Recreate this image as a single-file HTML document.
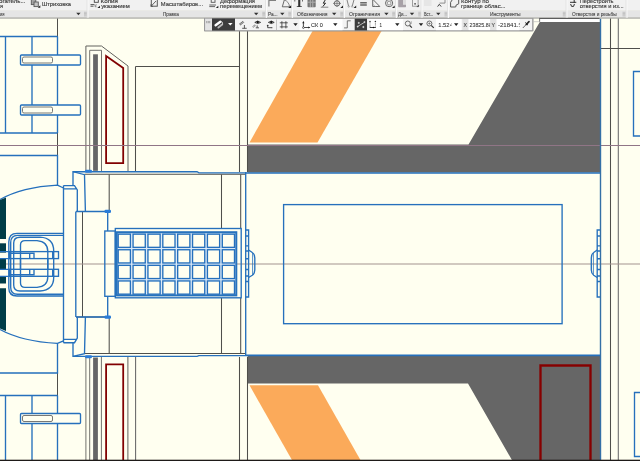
<!DOCTYPE html>
<html lang="ru">
<head>
<meta charset="utf-8">
<title>КОМПАС-3D</title>
<style>
html,body{margin:0;padding:0;background:#fffff0;overflow:hidden}
body{width:640px;height:461px;position:relative;font-family:"Liberation Sans",sans-serif}
svg{position:absolute;left:0;top:0;display:block}
.b{stroke:#2570bc;fill:none;stroke-width:1.35}
.b2{stroke:#2873bd;fill:none;stroke-width:1.8}
.k{stroke:#50504c;fill:none;stroke-width:1.05}
.g{stroke:#73736e;fill:none;stroke-width:1}
.r{stroke:#820606;fill:none;stroke-width:1.8}
.p{stroke:#907586;fill:none;stroke-width:1}
.t{font-family:"Liberation Sans",sans-serif;font-size:6.1px;fill:#333;stroke:#333;stroke-width:0.12px}
.l{font-family:"Liberation Sans",sans-serif;font-size:5.1px;fill:#4a4a4a;stroke:#4a4a4a;stroke-width:0.12px}
.f{font-family:"Liberation Sans",sans-serif;font-size:6.1px;fill:#333;stroke:#333;stroke-width:0.08px}
</style>
</head>
<body>
<svg width="640" height="461" viewBox="0 0 640 461">
<defs><filter id="soft" x="-10" y="-10" width="660" height="60" filterUnits="userSpaceOnUse"><feGaussianBlur stdDeviation="0.3"/></filter><filter id="soft2" x="-10" y="-10" width="660" height="481" filterUnits="userSpaceOnUse"><feGaussianBlur stdDeviation="0.32"/></filter></defs>
<rect x="0" y="0" width="640" height="461" fill="#fffff0"/>

<g id="drawing" filter="url(#soft2)">
<rect x="-10" y="-10" width="660" height="481" fill="#fffff0"/>
<!-- ===== fills ===== -->
<g id="fills" shape-rendering="geometricPrecision">
<!-- orange top -->
<polygon points="319.9,18 389,18 317.5,142.5 249.5,142.5" fill="#fbaa5a"/>
<!-- orange bottom -->
<polygon points="249.5,385.3 318,385.3 361,461 292.5,461" fill="#fbaa5a"/>
<!-- gray top -->
<polygon points="539.8,22 600,22 600,172.5 247.6,172.5 247.6,144.5 468.5,144.5" fill="#666666"/>
<!-- gray bottom -->
<polygon points="247.6,355.8 600.3,355.8 600.3,461 512.5,461 468,383.5 247.6,383.5" fill="#666666"/>
<!-- white strip above gray -->
<rect x="539.5" y="18.500" width="60" height="3.500" fill="#ffffff"/>
</g>

<!-- ===== thin black construction lines ===== -->
<g id="black">
<path class="k" d="M57.5,18V155.5"/>
<path class="k" d="M57.5,373V461"/>
<path class="k" d="M239.500,31V172 M247.500,31V172 M239.500,357V461 M247.500,357V461"/>
<path class="k" d="M135.500,66.500H239.500 M135.500,66.500V172"/>
<path class="k" d="M610.500,18V461"/><path class="k" d="M618.300,18V461" style="stroke:#6a6a6a"/>
<path class="k" d="M601,48.500H640"/>

</g>

<!-- door panel top -->
<g id="doortop">
<path class="g" d="M85.900,172V46H101.500L128,66V172" style="stroke:#62625e"/>
<path class="g" d="M89.700,172V50.300H101.500V172"/>
<rect x="93.100" y="54.300" width="4.800" height="116.500" fill="#666"/>
<path class="r" d="M106.100,56L123.200,68V163.200H106.100Z"/>
</g>
<!-- door panel bottom -->
<g id="doorbot">
<path class="g" d="M85.900,357V461 M89.700,357V461 M101.400,357V461"/><path class="g" style="stroke:#62625e" d="M127.900,357V461"/><path class="k" style="stroke:#666" d="M135.600,357V461"/>
<rect x="93.100" y="357.500" width="4.800" height="104" fill="#666"/>
<path class="r" d="M106.100,461V364.400H123.200V461"/>
</g>
<!-- inner body black -->
<g id="bodyblack">
<path class="k" d="M84.500,174.300H245.500 M84.500,353.500H245.500"/>
<path class="k" d="M109.200,174.500V211.500 M109.200,317V354"/>
<path class="k" d="M221.500,174.500V229 M221.500,298V354"/>
<path class="k" d="M240.700,174.500V228.500 M240.700,298V354"/>
<path class="k" d="M82.500,211.500V317"/>
<path class="k" d="M76,211.500H109 M76,317H109"/>
</g>
<!-- big dark red rect bottom right -->
<path d="M540.500,461V365.500H590.500V461" fill="none" stroke="#860505" stroke-width="2.4"/>

<!-- center lines -->
<path class="p" d="M0,145.500H640"/>
<path class="p" d="M0,264H640" style="stroke:#a3938f"/>
<!-- ===== blue geometry ===== -->
<g id="blue">
<!-- left top block -->
<path class="b" d="M0,36.500H57.500 M5.500,36.500V133 M32,36.500V133 M57.500,36.500V133 M0,133H57.500"/>
<rect class="b" x="20.500" y="55" width="60" height="10" rx="1" style="fill:#fffff0"/>
<rect x="22.500" y="57" width="30" height="6" rx="1.500" fill="#fffff0" stroke="#555" stroke-width="0.800"/>
<rect class="b" x="20.500" y="105" width="60" height="10" rx="1" style="fill:#fffff0"/>
<rect x="22.500" y="107" width="30" height="6" rx="1.500" fill="#fffff0" stroke="#555" stroke-width="0.800"/>
<!-- left bottom block -->
<path class="b" d="M0,395.500H57.500 M5.500,395.500V461 M32,395.500V461 M57.500,395.500V461"/>
<rect class="b" x="20.500" y="413.500" width="60" height="10" rx="1" style="fill:#fffff0"/>
<rect x="22.500" y="415.500" width="30" height="6" rx="1.500" fill="#fffff0" stroke="#555" stroke-width="0.800"/>
<!-- horizontal lines near arcs -->
<path class="b" d="M0,155.500H57.500V185.200 M0,373H57.500V343"/>
<!-- arcs -->
<path class="b" d="M0,199.500Q22,187 57.500,185.100L63.500,188"/>
<path class="b" d="M0,329.500Q22,341.500 57.500,343.400L63.500,340.800"/>
<!-- dark teal segments -->
<path d="M0,200L6,197.500V239H0Z" fill="#003c46"/>
<rect x="0" y="243.300" width="6" height="9.300" fill="#003c46"/>
<rect x="0" y="258.200" width="6" height="11.500" fill="#003c46"/>
<rect x="0" y="276.300" width="6" height="7.200" fill="#003c46"/>
<path d="M0,288.300H6V331L0,328.500Z" fill="#003c46"/>
<!-- bumper column -->
<path class="b" d="M63.500,185.600H74.500L77.300,190V211.500 M63.500,185.600V342.700 M63.500,188.800H76"/>
<path class="b" d="M63.500,342.700H74.500L77.300,338V317 M63.500,339.300H76"/>
<path class="b" d="M75.800,211.500V317"/>
<path class="b" d="M73,185.600V171.700H197L199,172.900H246 M73,342.700V356.400H197L199,355.600H246"/>
<path class="b" d="M246,173H601 M246,355.400H601" style="stroke-width:1.6"/>
<path class="b" d="M73,171.700L84.500,174.700L85.400,211.500 M73,356.400L84.500,353.700L85.400,317"/>
<path class="b" d="M76,211.500H108 M76,317H108"/>
<path class="b" d="M107.700,211.500V231 M107.700,296.500V317"/>
<rect x="104.500" y="209.800" width="6.500" height="3.200" rx="1.200" fill="#2b7cd8"/>
<rect x="104.500" y="315.500" width="6.500" height="3.200" rx="1.200" fill="#2b7cd8"/>
<rect x="85" y="169.800" width="7" height="3" rx="1.200" fill="#2b7cd8"/>
<rect x="85" y="355.300" width="7" height="3" rx="1.200" fill="#2b7cd8"/>
<!-- grid side panel -->
<rect class="b" x="104.800" y="231" width="10.500" height="65.300"/>
<!-- grid -->
<rect class="b" x="115.300" y="228.500" width="125.900" height="69.300"/>
<rect class="b2" x="116.700" y="232.200" width="119.600" height="63.200" style="fill:#dceaf7;stroke-width:2"/>
<rect class="b" x="118.20" y="234.15" width="12.200" height="13.200" style="fill:#fffff0"/>
<rect class="b" x="133.07" y="234.15" width="12.200" height="13.200" style="fill:#fffff0"/>
<rect class="b" x="147.94" y="234.15" width="12.200" height="13.200" style="fill:#fffff0"/>
<rect class="b" x="162.81" y="234.15" width="12.200" height="13.200" style="fill:#fffff0"/>
<rect class="b" x="177.68" y="234.15" width="12.200" height="13.200" style="fill:#fffff0"/>
<rect class="b" x="192.55" y="234.15" width="12.200" height="13.200" style="fill:#fffff0"/>
<rect class="b" x="207.42" y="234.15" width="12.200" height="13.200" style="fill:#fffff0"/>
<rect class="b" x="222.29" y="234.15" width="12.200" height="13.200" style="fill:#fffff0"/>
<rect class="b" x="118.20" y="249.75" width="12.200" height="13.200" style="fill:#fffff0"/>
<rect class="b" x="133.07" y="249.75" width="12.200" height="13.200" style="fill:#fffff0"/>
<rect class="b" x="147.94" y="249.75" width="12.200" height="13.200" style="fill:#fffff0"/>
<rect class="b" x="162.81" y="249.75" width="12.200" height="13.200" style="fill:#fffff0"/>
<rect class="b" x="177.68" y="249.75" width="12.200" height="13.200" style="fill:#fffff0"/>
<rect class="b" x="192.55" y="249.75" width="12.200" height="13.200" style="fill:#fffff0"/>
<rect class="b" x="207.42" y="249.75" width="12.200" height="13.200" style="fill:#fffff0"/>
<rect class="b" x="222.29" y="249.75" width="12.200" height="13.200" style="fill:#fffff0"/>
<rect class="b" x="118.20" y="265.35" width="12.200" height="13.200" style="fill:#fffff0"/>
<rect class="b" x="133.07" y="265.35" width="12.200" height="13.200" style="fill:#fffff0"/>
<rect class="b" x="147.94" y="265.35" width="12.200" height="13.200" style="fill:#fffff0"/>
<rect class="b" x="162.81" y="265.35" width="12.200" height="13.200" style="fill:#fffff0"/>
<rect class="b" x="177.68" y="265.35" width="12.200" height="13.200" style="fill:#fffff0"/>
<rect class="b" x="192.55" y="265.35" width="12.200" height="13.200" style="fill:#fffff0"/>
<rect class="b" x="207.42" y="265.35" width="12.200" height="13.200" style="fill:#fffff0"/>
<rect class="b" x="222.29" y="265.35" width="12.200" height="13.200" style="fill:#fffff0"/>
<rect class="b" x="118.20" y="280.95" width="12.200" height="13.200" style="fill:#fffff0"/>
<rect class="b" x="133.07" y="280.95" width="12.200" height="13.200" style="fill:#fffff0"/>
<rect class="b" x="147.94" y="280.95" width="12.200" height="13.200" style="fill:#fffff0"/>
<rect class="b" x="162.81" y="280.95" width="12.200" height="13.200" style="fill:#fffff0"/>
<rect class="b" x="177.68" y="280.95" width="12.200" height="13.200" style="fill:#fffff0"/>
<rect class="b" x="192.55" y="280.95" width="12.200" height="13.200" style="fill:#fffff0"/>
<rect class="b" x="207.42" y="280.95" width="12.200" height="13.200" style="fill:#fffff0"/>
<rect class="b" x="222.29" y="280.95" width="12.200" height="13.200" style="fill:#fffff0"/>
<!-- body right -->
<path class="b" d="M245.700,172V356"/>
<!-- fittings left -->
<path class="b" d="M245.600,230H248.600V245.800H245.600 M245.600,281.500H248.600V297H245.600 M248.600,245.800V281.500 M245.600,236H248.600 M245.600,251H248.600 M245.600,258.700H248.600 M245.600,269.500H248.600 M245.600,276H248.600"/>
<path class="b" d="M248.600,250L252.300,252.500Q254.800,254 254.800,258V270Q254.800,273.500 252.300,275.200L248.600,277.500"/>
<path class="b" d="M252.600,253V274.800" style="stroke-width:0.8"/>
<!-- fittings right -->
<path class="b" d="M600.500,230H597.200V245.800H600.500 M600.500,281.500H597.200V297H600.500 M597.200,245.800V281.500 M600.500,236H597.200 M600.500,251H597.200 M600.500,258.700H597.200 M600.500,269.500H597.200 M600.500,276H597.200"/>
<path class="b" d="M597.200,250L593.700,252.500Q591.300,254 591.300,258V270Q591.300,273.500 593.700,275.200L597.200,277.500"/>
<path class="b" d="M593.400,253V274.800" style="stroke-width:0.8"/>
<!-- inner blue rect -->
<rect class="b" x="283.600" y="204.600" width="278.500" height="119.100"/>
<!-- right blue vertical -->
<path d="M600.500,18.500V461" stroke="#3470a6" stroke-width="1.400" fill="none"/>
<!-- right rects -->
<path class="b" d="M640,71.500H633.500V136H640 M640,392.500H634.500V456.500H640"/>
</g>

<!-- handle -->
<g id="handle">
<path class="b" d="M63.500,233.400H17Q8.800,233.400 8.800,242V288Q8.800,296 17,296H63.500"/>
<path class="b" d="M63.500,235.300H17.500Q10.700,235.300 10.700,242.500V287.500Q10.700,294.200 17.500,294.200H63.500"/>
<path class="b" d="M20,237.200H40Q53.700,238 53.700,251V277.500Q53.700,290 40,291H20Q13.700,291 13.700,285V243Q13.700,237.200 20,237.200Z"/>
<path class="b" d="M25,240.600H37Q47.800,241.500 47.800,251.500V277Q47.800,286.500 37,287.300H25Q20.500,287.300 20.500,283V245Q20.500,240.600 25,240.600Z"/>
<rect class="b" x="9.400" y="251.600" width="49.100" height="7"/>
<rect class="b" x="9.400" y="269.300" width="49.100" height="7"/>
<path class="b" d="M52.700,251.600V258.600 M52.700,269.300V276.300"/>
<path class="b" d="M9.400,253.200H34V258.600 M29.700,253.200V258.600 M9.400,274.700H34V269.300 M29.700,274.700V269.300"/>
<path class="b" d="M0,251.600H9.400 M0,258.600H9.400 M0,269.300H9.400 M0,276.300H9.400"/>
<path class="b" d="M20.500,258.600V269.300 M47.800,258.600V269.300"/>
</g>

</g>
<!-- ===== ribbon ===== -->
<g id="ribbon" filter="url(#soft)">
<rect x="0" y="0" width="640" height="10.200" fill="#f1f1f1"/>
<rect x="0" y="10.200" width="640" height="7.600" fill="#e5e5e5"/>
<rect x="0" y="17.400" width="640" height="1.300" fill="#acaca8"/>
<text class="t" x="-1" y="2.5" textLength="26.5" lengthAdjust="spacingAndGlyphs">огатель...</text>
<text class="t" x="0" y="7.8" textLength="3.0" lengthAdjust="spacingAndGlyphs">я</text>
<text class="t" x="42" y="5.5" textLength="29.0" lengthAdjust="spacingAndGlyphs">Штриховка</text>
<text class="t" x="100.5" y="2.5" textLength="17.5" lengthAdjust="spacingAndGlyphs">Копия</text>
<text class="t" x="101.2" y="7.8" textLength="28.6" lengthAdjust="spacingAndGlyphs">указанием</text>
<text class="t" x="160.8" y="5.5" textLength="42.2" lengthAdjust="spacingAndGlyphs">Масштабиров...</text>
<text class="t" x="220" y="2.5" textLength="35.0" lengthAdjust="spacingAndGlyphs">Деформация</text>
<text class="t" x="220" y="7.8" textLength="42.0" lengthAdjust="spacingAndGlyphs">перемещением</text>
<text class="t" x="461" y="2.5" textLength="28.0" lengthAdjust="spacingAndGlyphs">Контур по</text>
<text class="t" x="461" y="7.8" textLength="44.5" lengthAdjust="spacingAndGlyphs">границе облас...</text>
<text class="t" x="579.8" y="2.5" textLength="33.6" lengthAdjust="spacingAndGlyphs">Перестроить</text>
<text class="t" x="579.8" y="7.8" textLength="43.8" lengthAdjust="spacingAndGlyphs">отверстия и из...</text>
<text class="l" x="0" y="16.0" textLength="4.5" lengthAdjust="spacingAndGlyphs">ия</text>
<text class="l" x="163" y="16.0" textLength="15.8" lengthAdjust="spacingAndGlyphs">Правка</text>
<text class="l" x="268" y="16.0" textLength="9.5" lengthAdjust="spacingAndGlyphs">Ра...</text>
<text class="l" x="297" y="16.0" textLength="30.5" lengthAdjust="spacingAndGlyphs">Обозначения</text>
<text class="l" x="349" y="16.0" textLength="31.0" lengthAdjust="spacingAndGlyphs">Ограничения</text>
<text class="l" x="398" y="16.0" textLength="9.0" lengthAdjust="spacingAndGlyphs">Ди...</text>
<text class="l" x="424" y="16.0" textLength="9.0" lengthAdjust="spacingAndGlyphs">Вст...</text>
<text class="l" x="490" y="16.0" textLength="30.6" lengthAdjust="spacingAndGlyphs">Инструменты</text>
<text class="l" x="572" y="16.0" textLength="44.6" lengthAdjust="spacingAndGlyphs">Отверстия и резьбы</text>
<path d="M76.20,12.80H80.60L78.40,15.20Z" fill="#333"/>
<path d="M254.00,12.80H258.40L256.20,15.20Z" fill="#333"/>
<path d="M280.10,12.80H284.50L282.30,15.20Z" fill="#333"/>
<path d="M332.00,12.80H336.40L334.20,15.20Z" fill="#333"/>
<path d="M384.20,12.80H388.60L386.40,15.20Z" fill="#333"/>
<path d="M409.80,12.80H414.20L412.00,15.20Z" fill="#333"/>
<path d="M436.10,12.80H440.50L438.30,15.20Z" fill="#333"/>
<path d="M84,12.3H87 M84,13.5H87 M84,14.7H87 M84,15.900H87" stroke="#b4b4b4" stroke-width="0.700" fill="none"/>
<path d="M262.3,12.3H265.3 M262.3,13.5H265.3 M262.3,14.7H265.3 M262.3,15.900H265.3" stroke="#b4b4b4" stroke-width="0.700" fill="none"/>
<path d="M288.3,12.3H291.3 M288.3,13.5H291.3 M288.3,14.7H291.3 M288.3,15.900H291.3" stroke="#b4b4b4" stroke-width="0.700" fill="none"/>
<path d="M340.3,12.3H343.3 M340.3,13.5H343.3 M340.3,14.7H343.3 M340.3,15.900H343.3" stroke="#b4b4b4" stroke-width="0.700" fill="none"/>
<path d="M392.2,12.3H395.2 M392.2,13.5H395.2 M392.2,14.7H395.2 M392.2,15.900H395.2" stroke="#b4b4b4" stroke-width="0.700" fill="none"/>
<path d="M418.2,12.3H421.2 M418.2,13.5H421.2 M418.2,14.7H421.2 M418.2,15.900H421.2" stroke="#b4b4b4" stroke-width="0.700" fill="none"/>
<path d="M444.5,12.3H447.5 M444.5,13.5H447.5 M444.5,14.7H447.5 M444.5,15.900H447.5" stroke="#b4b4b4" stroke-width="0.700" fill="none"/>
<path d="M562.8,12.3H565.8 M562.8,13.5H565.8 M562.8,14.7H565.8 M562.8,15.900H565.8" stroke="#b4b4b4" stroke-width="0.700" fill="none"/>
<path d="M622.5,12.3H625.5 M622.5,13.5H625.5 M622.5,14.7H625.5 M622.5,15.900H625.5" stroke="#b4b4b4" stroke-width="0.700" fill="none"/>
<path d="M88,0V18" stroke="#fafafa" stroke-width="1" fill="none"/><path d="M87,0V18" stroke="#dcdcdc" stroke-width="0.600" fill="none"/>
<path d="M266.5,0V18" stroke="#fafafa" stroke-width="1" fill="none"/><path d="M265.5,0V18" stroke="#dcdcdc" stroke-width="0.600" fill="none"/>
<path d="M292.5,0V18" stroke="#fafafa" stroke-width="1" fill="none"/><path d="M291.5,0V18" stroke="#dcdcdc" stroke-width="0.600" fill="none"/>
<path d="M344.5,0V18" stroke="#fafafa" stroke-width="1" fill="none"/><path d="M343.5,0V18" stroke="#dcdcdc" stroke-width="0.600" fill="none"/>
<path d="M396.5,0V18" stroke="#fafafa" stroke-width="1" fill="none"/><path d="M395.5,0V18" stroke="#dcdcdc" stroke-width="0.600" fill="none"/>
<path d="M422,0V18" stroke="#fafafa" stroke-width="1" fill="none"/><path d="M421,0V18" stroke="#dcdcdc" stroke-width="0.600" fill="none"/>
<path d="M448.5,0V18" stroke="#fafafa" stroke-width="1" fill="none"/><path d="M447.5,0V18" stroke="#dcdcdc" stroke-width="0.600" fill="none"/>
<path d="M567,0V18" stroke="#fafafa" stroke-width="1" fill="none"/><path d="M566,0V18" stroke="#dcdcdc" stroke-width="0.600" fill="none"/>
<path d="M627,0V18" stroke="#fafafa" stroke-width="1" fill="none"/><path d="M626,0V18" stroke="#dcdcdc" stroke-width="0.600" fill="none"/>

<g id="ricons" fill="none" stroke="#5a5a5a" stroke-width="0.900">
<!-- hatch icon -->
<rect x="31.300" y="-1" width="4.500" height="5.600" fill="#a4a4a4"/>
<rect x="34" y="2" width="4.300" height="4.600" fill="#c4c4c4"/>
<path d="M37.800,7.800H40.300V5.300Z" fill="#222" stroke="none"/>
<!-- copy icon -->
<rect x="94.300" y="-2" width="4" height="4.300" stroke="#444"/>
<path d="M90.500,4.600H94.500 M90.500,6.200H93.500" stroke="#444"/>
<path d="M96.800,4.800Q94.800,4.800 94.800,6Q94.800,7 96.500,6.800" stroke="#555" stroke-width="0.700"/>
<path d="M97.300,7.900H100V5.700Z" fill="#222" stroke="none"/>
<!-- scale icon -->
<rect x="151.300" y="-1" width="6" height="7.200" stroke="#555" stroke-width="1"/>
<path d="M156,1L151,6.300 M151,6.300V4.300 M151,6.300H153" stroke="#555" stroke-width="0.900"/>
<!-- deform icon -->
<rect x="211.200" y="-2" width="3.800" height="4.300" stroke="#555"/>
<path d="M209.300,5H216 M209.300,6.600H215" stroke="#555"/>
<path d="M215.800,7.900H218.300V5.800Z" fill="#222" stroke="none"/>
<!-- dimension flag icon -->
<path d="M268.900,6.600V0.300H276" stroke="#808080" stroke-width="1.200"/>
<!-- angle icon -->
<path d="M284.600,-1L282.300,6.800H289.800" stroke="#5a5a5a" stroke-width="0.900"/><path d="M284.300,0Q288.800,1.300 289.600,6.800" stroke="#6a6a6a" stroke-width="0.800"/>
<path d="M288.200,7.900H291.200V5.200Z" fill="#222" stroke="none"/>
<!-- T icon -->
<path d="M298.200,-1H300.300V6.300H301.800V7.100H296.800V6.300H298.200Z" fill="#333" stroke="none"/>
<path d="M294.800,-1V1.500 M302.500,-1V1.500" stroke="#444" stroke-width="0.800"/>
<!-- table icon -->
<rect x="307.500" y="-1" width="8.200" height="8.200" rx="0.800" fill="#787878" stroke="none"/>
<path d="M307.500,2.200H315.700 M310.300,2.600V7 M312.800,2.600V7 M310.300,-1V1.800 M312.800,-1V1.800" stroke="#d8d8d8" stroke-width="0.600"/>
<!-- lightning -->
<path d="M325.800,-1L323.300,3.200H325.500L322.800,6.600" stroke="#222" stroke-width="1"/>
<path d="M320.800,7.200H328.300" stroke="#555" stroke-width="0.700"/>
<!-- target icon -->
<circle cx="337" cy="3.400" r="2.700" stroke="#444" stroke-width="0.800"/>
<path d="M333,3.400H341 M337,-1V7" stroke="#555" stroke-width="0.600"/>
<path d="M340.300,7.900H343V5.500Z" fill="#222" stroke="none"/>
<!-- \/ icon -->
<path d="M346.800,-1L348.600,6.300 M354.200,-1L352.200,6.300" stroke="#666" stroke-width="0.800"/>
<circle cx="348.700" cy="6.500" r="0.800" stroke="#888" stroke-width="0.500"/>
<circle cx="352.100" cy="6.500" r="0.800" stroke="#888" stroke-width="0.500"/>
<path d="M353.500,7.900H356.200V5.500Z" fill="#222" stroke="none"/>
<!-- equal icon -->
<rect x="360.200" y="2.100" width="6.600" height="1.400" fill="#5c5c5c" stroke="none"/><rect x="360.200" y="4.300" width="6.600" height="1.400" fill="#5c5c5c" stroke="none"/>
<!-- triangle -->
<path d="M372.700,-1V6.500H379.800L372.700,-0.800" stroke="#5a5a5a" stroke-width="0.900"/>
<path d="M372.700,4.300L375.500,6.500" stroke="#999" stroke-width="0.600"/>
<!-- circle icon -->
<circle cx="389.100" cy="3.100" r="3.600" stroke="#5a5a5a" stroke-width="0.900"/>
<circle cx="389.100" cy="3.100" r="1.900" stroke="#808080" stroke-width="0.800"/>
<path d="M392,7.900H394.700V5.500Z" fill="#222" stroke="none"/>
<!-- hatched rect -->
<rect x="398.200" y="-1" width="7.800" height="8.200" rx="0.600" fill="#a7a1a7" stroke="none"/>
<rect x="403" y="-1" width="3" height="5.800" fill="#dedede" stroke="none"/>
<!-- box with dot -->
<rect x="412.500" y="-1" width="5.600" height="7.200" stroke="#8a8a8a" stroke-width="0.800"/>
<rect x="414.300" y="3.200" width="1.500" height="1.300" fill="#333" stroke="none"/>
<path d="M416.800,6.600H418.600V5" stroke="#333" stroke-width="0.800"/>
<!-- faint icon -->
<rect x="424" y="-1" width="7.500" height="7" fill="#e6e6e6" stroke="none"/>
<!-- insert icon -->
<path d="M439.500,3.100H445V-1" stroke="#777" stroke-width="0.800"/>
<path d="M437.600,6.600L439.300,4.300L441.200,6.600" stroke="#333" stroke-width="0.900"/>
<!-- contour icon -->
<path d="M452.800,-1L450.600,2.300V7H455.700L456.200,5L458.700,3.800V-1" stroke="#555" stroke-width="1"/>
<!-- rebuild holes icon -->
<path d="M570,2.300H576.300 M574.200,-1V3" stroke="#333" stroke-width="1"/>
<path d="M570.600,4L571.600,6.400H573.600L574.400,4" stroke="#333" stroke-width="1"/>
</g>

</g>
<!-- ===== floating toolbar ===== -->
<g id="ftb" filter="url(#soft)">
<rect x="204.500" y="18.400" width="328.500" height="12.400" fill="#f3f3f3" stroke="#9c9c9c" stroke-width="0.900"/>
<rect x="205" y="18.800" width="7" height="11.800" fill="#e4e4e4"/>
<path d="M206.300,21.600H210.500 M206.300,22.700H210.500" stroke="#6a6a6a" stroke-width="0.700" stroke-dasharray="0.900 0.600"/>
<rect x="212" y="18.400" width="23" height="12.600" fill="#3d3d3d"/>
<rect x="354.700" y="18.600" width="12.300" height="12.200" fill="#3d3d3d"/>
<rect x="299.5" y="19" width="43.0" height="11.400" fill="#ffffff"/>
<rect x="368.5" y="19" width="34.5" height="11.400" fill="#ffffff"/>
<rect x="436" y="19" width="25.5" height="11.400" fill="#ffffff"/>
<rect x="468.5" y="19" width="21.5" height="11.400" fill="#ffffff"/>
<rect x="496.5" y="19" width="23.0" height="11.400" fill="#ffffff"/>
<rect x="462.3" y="19" width="6.0" height="11.400" fill="#e2e2e2"/>
<rect x="490.2" y="19" width="6.100000000000023" height="11.400" fill="#e2e2e2"/>
<path d="M276.500,19.500V30" stroke="#b8b8b8" stroke-width="0.800"/>
<text class="f" x="311" y="26.5" textLength="11.8" lengthAdjust="spacingAndGlyphs">СК 0</text>
<text class="f" x="379.5" y="26.5" textLength="2.5" lengthAdjust="spacingAndGlyphs">1</text>
<text class="f" x="438.3" y="26.5" textLength="11.2" lengthAdjust="spacingAndGlyphs">1.52</text>
<text class="f" x="463.5" y="26.5" textLength="3.5" lengthAdjust="spacingAndGlyphs">X</text>
<text class="f" x="469.5" y="26.5" textLength="19.2" lengthAdjust="spacingAndGlyphs">23825.8</text>
<text class="f" x="491.5" y="26.5" textLength="3.5" lengthAdjust="spacingAndGlyphs">Y</text>
<text class="f" x="498" y="26.5" textLength="20.5" lengthAdjust="spacingAndGlyphs">-21841.</text>
<path d="M228.00,23.00H232.60L230.30,25.60Z" fill="#ffffff"/>
<path d="M293.30,23.30H297.70L295.50,25.90Z" fill="#222"/>
<path d="M333.10,23.30H337.50L335.30,25.90Z" fill="#222"/>
<path d="M395.10,23.30H399.50L397.30,25.90Z" fill="#222"/>
<path d="M418.80,23.30H423.20L421.00,25.90Z" fill="#222"/>
<path d="M454.00,23.30H458.40L456.20,25.90Z" fill="#222"/>

<clipPath id="c1"><rect x="449.600" y="19" width="2" height="11"/></clipPath>
<clipPath id="c2"><rect x="488.800" y="19" width="1.300" height="11"/></clipPath>
<clipPath id="c3"><rect x="518.300" y="19" width="1.300" height="11"/></clipPath>
<text class="f" x="449.900" y="26.500" clip-path="url(#c1)">4</text>
<text class="f" x="489" y="26.500" clip-path="url(#c2)">8</text>
<text class="f" x="518.500" y="26.500" clip-path="url(#c3)">5</text>
<g id="ficons" fill="none" stroke="#2a2a2a" stroke-width="0.900">
<!-- paperclip -->
<path d="M215.600,25.300L220.400,21.700" stroke="#ffffff" stroke-width="2.400" stroke-linecap="round"/>
<path d="M218.400,27.600L222.200,24.600" stroke="#b9b9b9" stroke-width="1.900" stroke-linecap="round"/><path d="M220.800,21.500Q223.300,21.800 222.600,24.300" stroke="#d8d8d8" stroke-width="0.900" fill="none"/>
<!-- pencil perp -->
<path d="M239.800,24.600L243.600,21.500" stroke="#4a4a4a" stroke-width="2.100" stroke-dasharray="0.700 0.500"/>
<path d="M244.400,25V28.300 M242.200,28.300H246.700" stroke="#333" stroke-width="0.800"/>
<!-- eye 1 -->
<path d="M254.800,22.400Q257.700,19.600 260.600,22.400Q257.700,24.800 254.800,22.400Z" fill="#f3f3f3" stroke="#222" stroke-width="0.800"/>
<circle cx="257.700" cy="22.200" r="1.150" fill="#111" stroke="none"/>
<path d="M252.800,27.200L255.600,24.800" stroke="#666" stroke-width="1.600" stroke-dasharray="0.700 0.500"/>
<path d="M257.200,25.400V27.600 M255.800,27.800H259" stroke="#333" stroke-width="0.800"/>
<!-- eye 2 -->
<path d="M268.400,22.400Q271.300,19.600 274.200,22.400Q271.300,24.800 268.400,22.400Z" fill="#f3f3f3" stroke="#222" stroke-width="0.800"/>
<circle cx="271.300" cy="22.200" r="1.150" fill="#111" stroke="none"/>
<path d="M267.700,24.800V27.700H271.200 M266.900,25.600H268.500" stroke="#222" stroke-width="0.800"/>
<circle cx="271.800" cy="27.700" r="0.600" fill="#222" stroke="none"/>
<!-- grid -->
<path d="M281.900,21.200V28.400 M285.900,21.200V28.400 M279.800,22.800H287.800 M279.800,26.900H287.800" stroke="#2a2a2a" stroke-width="0.750"/>
<!-- CS icon -->
<path d="M303.400,27V21.800 M304,27.500H309.500" stroke="#222" stroke-width="0.800"/>
<path d="M302.300,23.200L303.400,21L304.500,23.200Z M308.300,26.400L310.300,27.500L308.300,28.600Z" fill="#222" stroke="none"/>
<circle cx="303.400" cy="27.600" r="0.900" fill="#fff" stroke="#222" stroke-width="0.600"/>
<!-- step icon -->
<path d="M344.100,27.900H347.300V20.800H350.700" stroke="#666" stroke-width="0.900"/>
<!-- ortho icon in dark box -->
<path d="M357.800,26.400L364.300,22.400" stroke="#d8d8d8" stroke-width="0.800"/>
<path d="M358.800,21.700l1.200,1.200l-1.200,1.200l-1.200,-1.200Z M364.500,21l1.100,1.100l-1.100,1.100l-1.100,-1.100Z M357.700,25.500l1.100,1.100l-1.100,1.100l-1.100,-1.100Z M363.300,25.800l1.200,1.200l-1.200,1.200l-1.200,-1.200Z" fill="#d0d0d0" stroke="none"/>
<!-- U nodes icon -->
<path d="M370,22.300V27.500H375.400V22.300" stroke="#555" stroke-width="0.700" stroke-dasharray="0.800 0.500"/>
<path d="M369.600,27.500H375.800" stroke="#222" stroke-width="0.800"/>
<circle cx="370" cy="21.500" r="0.750" fill="#333" stroke="none"/><circle cx="375.400" cy="21.500" r="0.750" fill="#333" stroke="none"/><circle cx="373.400" cy="27.500" r="0.700" fill="#111" stroke="none"/>
<!-- magnifier 1 -->
<circle cx="407.800" cy="23.500" r="2.500" stroke="#4a4a4a" stroke-width="0.800"/>
<path d="M409.700,25.500L411.900,27.700" stroke="#333" stroke-width="1.100"/>
<path d="M411.300,21.200V24" stroke="#888" stroke-width="0.600"/>
<!-- magnifier 2 -->
<circle cx="429.400" cy="23.500" r="2.500" stroke="#4a4a4a" stroke-width="0.800"/>
<path d="M431.300,25.500L433.800,27.800" stroke="#333" stroke-width="1.100"/>
<path d="M428.200,23.500H430.600 M429.400,22.300V24.700" stroke="#555" stroke-width="0.600"/>
<!-- eyedropper -->
<path d="M522.800,28L526.500,24.200" stroke="#555" stroke-width="0.900"/>
<path d="M526.300,24.300L529,21.600" stroke="#2a2a2a" stroke-width="1.700" stroke-linecap="round"/>
<path d="M525.300,22.500L528,25.200" stroke="#222" stroke-width="1"/>
</g>

</g>
<rect x="539.300" y="17.900" width="60.200" height="1.100" fill="#5c5c5c"/>
<rect x="539.200" y="18" width="0.900" height="4" fill="#666"/>
<path d="M533,21.700H539.500" stroke="#c4c4c0" stroke-width="0.800"/>
<path d="M204.600,18.500V30.900H532.700V18.500" stroke="#989898" stroke-width="0.800" fill="none"/>
<rect x="0" y="459.700" width="640" height="1.300" fill="#1e1a18"/>
</svg>
</body>
</html>
